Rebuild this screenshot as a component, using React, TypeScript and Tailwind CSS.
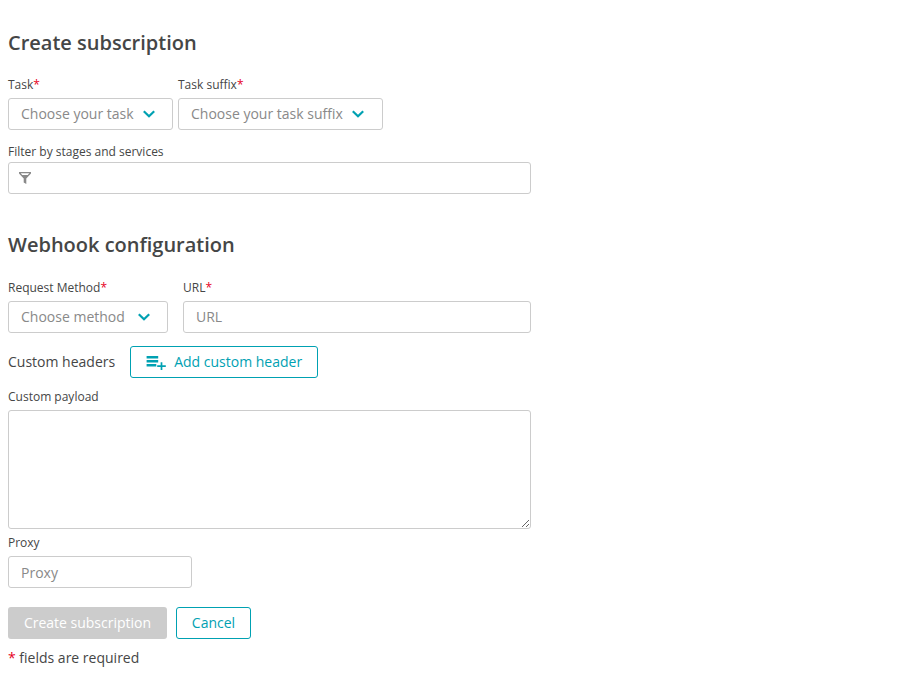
import React from 'react';

function Star() {
  return <span className="text-[#e60023]">*</span>;
}

function Chevron() {
  return (
    <svg width="12" height="8" viewBox="0 0 12 8" className="shrink-0" fill="none" stroke="#00a1b2" strokeWidth="2.2">
      <path d="M0.8 1.2 6 6.2 11.2 1.2" />
    </svg>
  );
}

function Label({ text, required }: { text: string; required?: boolean }) {
  return (
    <div className="h-4 text-[12px] leading-4 whitespace-nowrap">
      {text}
      {required && <Star />}
    </div>
  );
}

function Select({ text, size }: { text: string; size: string }) {
  return (
    <button className={`${size} flex h-8 items-center rounded-[3px] border border-[#ccc] bg-white pl-3 text-[14px] whitespace-nowrap text-[#898989]`}>
      <span className="pb-0.5">{text}</span>
      <Chevron />
    </button>
  );
}

const field = 'block rounded-[3px] border border-[#ccc] bg-white px-3 text-[14px] placeholder:text-[#898989] outline-none';

export default function App() {
  return (
    <main className="h-[674px] overflow-hidden bg-white pl-2 font-['Open_Sans',sans-serif] text-[14px] text-[#454646]">
      <h2 className="pt-[29px] text-[20px] leading-7 font-semibold">Create subscription</h2>
      <div className="mt-5 flex gap-[5px]">
        <div>
          <Label text="Task" required />
          <div className="mt-[5px]"><Select text="Choose your task" size="w-[165px] gap-[9px]" /></div>
        </div>
        <div>
          <Label text="Task suffix" required />
          <div className="mt-[5px]"><Select text="Choose your task suffix" size="w-[205px] gap-[9px]" /></div>
        </div>
      </div>
      <div className="mt-[14px]">
        <Label text="Filter by stages and services" />
        <div className="mt-[2px] flex h-8 w-[523px] items-center rounded-[3px] border border-[#ccc] pl-[10px]">
          <svg width="12" height="12" viewBox="0 0 12 12" fill="#898989" fillRule="evenodd">
            <path d="M0 0H12V1.5L7.3 6.5V12L4.7 10.5V6.5L0 1.5ZM1.7 1.3 3.2 3H8.8L10.3 1.3Z" />
          </svg>
        </div>
      </div>
      <h2 className="mt-[37px] text-[20px] leading-7 font-semibold">Webhook configuration</h2>
      <div className="mt-[21px] flex gap-[15px]">
        <div>
          <Label text="Request Method" required />
          <div className="mt-[5px]"><Select text="Choose method" size="w-[160px] gap-[13px]" /></div>
        </div>
        <div>
          <Label text="URL" required />
          <input className={`${field} mt-[5px] h-8 w-[348px] pb-0.5`} placeholder="URL" />
        </div>
      </div>
      <div className="mt-[13px] flex h-8 items-center gap-[15px]">
        <span className="pb-0.5">Custom headers</span>
        <button className="flex h-8 w-[188px] items-center gap-2 rounded-[3px] border border-[#00a1b2] pl-[15px] whitespace-nowrap text-[#00a1b2]">
          <svg width="20" height="16" viewBox="0 0 20 16" fill="none" stroke="#00a1b2" strokeWidth="2.5">
            <path d="M0.6 3.3H12.2M0.6 7.3H12.2M0.6 11.2H10.3" />
            <path d="M15.5 8.2V16M11.2 12.2H19.8" strokeWidth="1.7" />
          </svg>
          <span className="pb-0.5">Add custom header</span>
        </button>
      </div>
      <div className="mt-[11px]">
        <Label text="Custom payload" />
        <textarea className={`${field} mt-[5px] h-[119px] w-[523px] resize`} />
      </div>
      <div className="mt-[6px]">
        <Label text="Proxy" />
        <input className={`${field} mt-[5px] h-8 w-[184px]`} placeholder="Proxy" />
      </div>
      <div className="mt-[19px] flex gap-[9px]">
        <button className="h-8 w-[159px] rounded-[3px] bg-[#ccc] pb-0.5 text-white">Create subscription</button>
        <button className="h-8 w-[75px] rounded-[3px] border border-[#00a1b2] pb-0.5 text-[#00a1b2]">Cancel</button>
      </div>
      <p className="mt-[9px] leading-5"><Star /> fields are required</p>
    </main>
  );
}
